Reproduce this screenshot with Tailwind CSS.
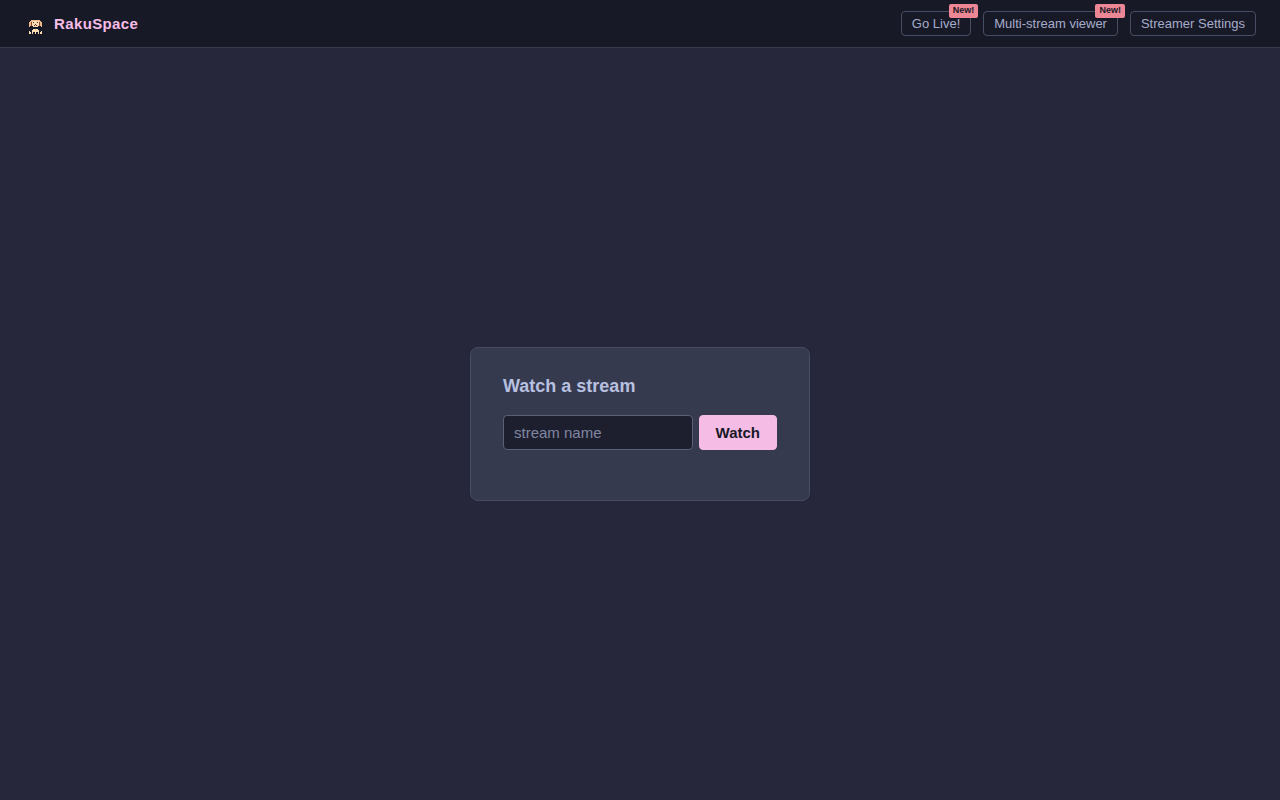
<!DOCTYPE html>
<html lang="en">
<head>
  <meta charset="UTF-8" />
  <meta name="viewport" content="width=device-width, initial-scale=1.0" />
  <title>RakuSpace</title>
  <script src="https://cdn.jsdelivr.net/npm/@tailwindcss/browser@4"></script>
</head>
<body class="min-h-screen flex flex-col bg-[#26273a] text-[#cad3f5] font-['Liberation_Sans',Arial,sans-serif]">
  <header class="h-12 px-6 flex items-center justify-between bg-[#181926] border-b border-[#363a4f]">
    <a href="/" class="flex items-center gap-2 text-[15px] leading-5 font-bold tracking-wide text-[#f5bde6]">
      <!-- pixel dog -->
      <svg class="w-[22px] h-6 mt-1.5" viewBox="0 0 22 24" shape-rendering="crispEdges" aria-hidden="true">
        <path fill="#eeb98a" d="M7 5h9v1h-9zM6 6h2v1h-2zM15 6h2v1h-2zM5 7h2v4h-2zM16 7h2v4h-2zM5 11h1v1h-1zM17 11h1v1h-1z" />
        <path fill="#fbdcb4" d="M8 6h7v5h-7zM9 11h5v1h-5zM9 14h5v3h-5zM8 15h1v4h-1zM14 15h1v4h-1zM11 17h1v2h-1zM5 16h1v3h-1zM17 16h1v3h-1zM6 17h1v2h-1zM16 17h1v2h-1z" />
        <path fill="#8a4f33" d="M7 7h1v4h-1zM15 7h1v4h-1z" />
        <path fill="#5a3028" d="M9 7h1v1h-1zM13 7h1v1h-1zM11 9h1v1h-1zM10 10h1v1h-1zM12 10h1v1h-1z" />
      </svg>
      <span>RakuSpace</span>
    </a>
    <nav class="flex items-center gap-3 text-[13px] leading-[15px] text-[#a5adcb]">
      <a href="/live" class="relative px-2.5 py-1 border border-[#494d64] rounded hover:text-[#cad3f5]">
        Go Live!
        <span class="absolute -top-2 -right-2 px-1 pt-px pb-[3px] rounded-xs bg-[#ed8796] text-[9px] leading-[10px] font-bold text-[#181926]">New!</span>
      </a>
      <a href="/multi" class="relative px-2.5 py-1 border border-[#494d64] rounded hover:text-[#cad3f5]">
        Multi-stream viewer
        <span class="absolute -top-2 -right-2 px-1 pt-px pb-[3px] rounded-xs bg-[#ed8796] text-[9px] leading-[10px] font-bold text-[#181926]">New!</span>
      </a>
      <a href="/settings" class="px-2.5 py-1 border border-[#494d64] rounded hover:text-[#cad3f5]">Streamer Settings</a>
    </nav>
  </header>

  <main class="flex-1 flex items-center justify-center">
    <form class="w-full max-w-[340px] px-8 pt-7 pb-[50px] bg-[#363a4f] border border-[#494d64] rounded-lg">
      <h1 class="mb-[19px] text-lg leading-5 font-bold text-[#b8c0e0]"><label for="stream">Watch a stream</label></h1>
      <div class="flex gap-1.5">
        <input
          id="stream"
          name="stream"
          type="text"
          placeholder="stream name"
          class="flex-1 min-w-0 px-2.5 py-2 text-[15px] leading-[17px] bg-[#1e1f2e] border border-[#5b6078] rounded placeholder:text-[#8087a2] focus:outline-none focus:border-[#f5bde6]"
        />
        <button type="submit" class="px-4 py-2 border border-[#f5bde6] rounded bg-[#f5bde6] text-[15px] leading-[17px] font-bold text-[#181926]">Watch</button>
      </div>
    </form>
  </main>
</body>
</html>
